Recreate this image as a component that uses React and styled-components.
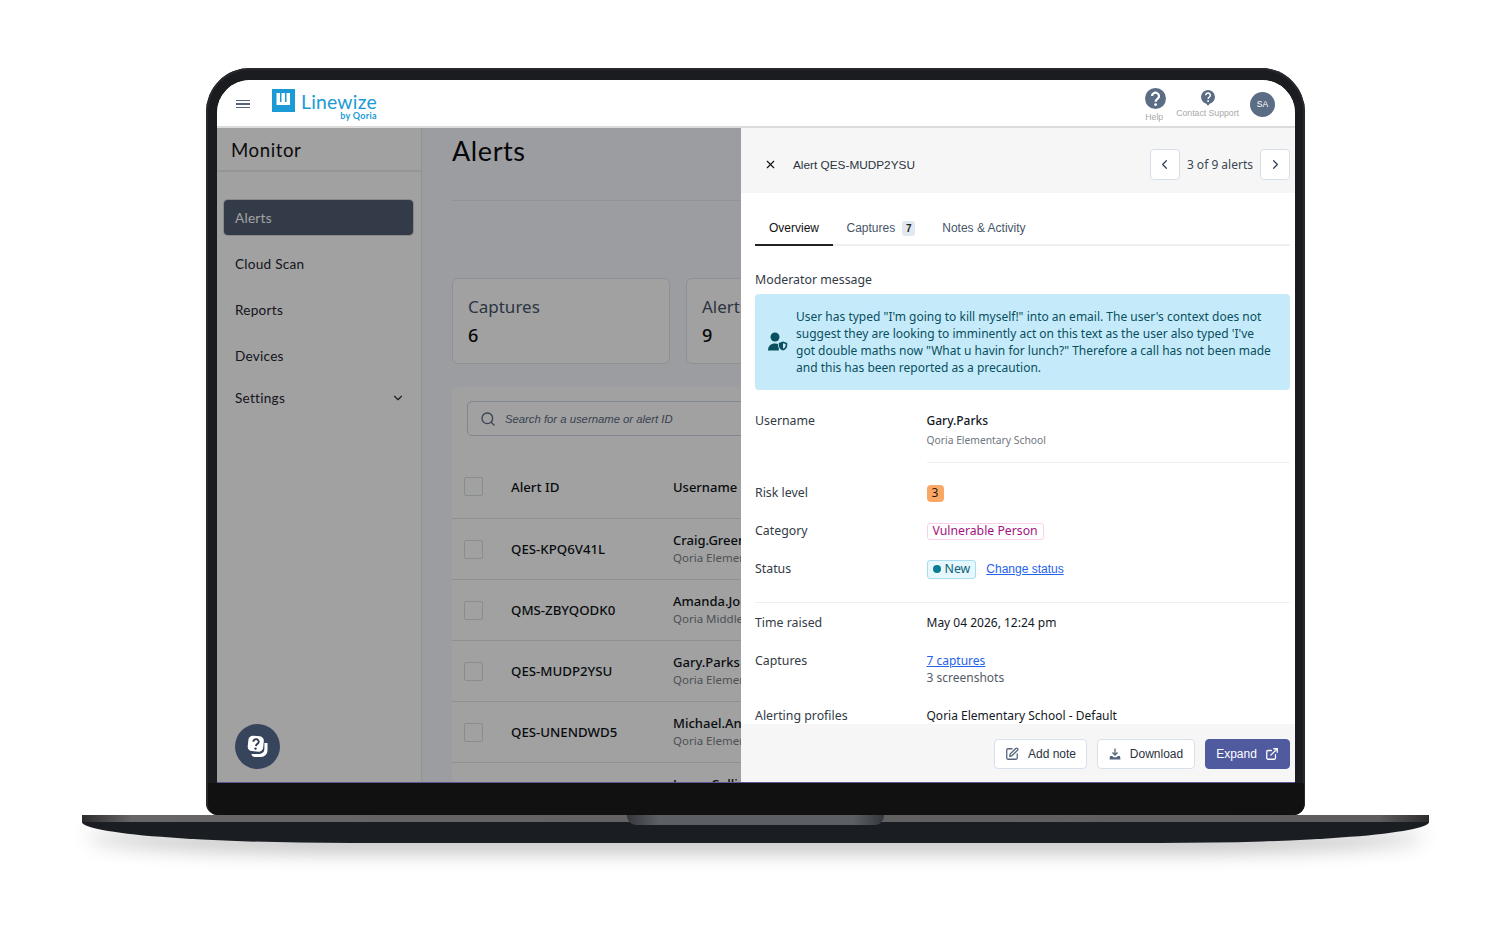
import React from "react";
import styled, { createGlobalStyle } from "styled-components";
import { ChevronDown, ChevronLeft, ChevronRight, ExternalLink, Search, SquarePen, X } from "lucide-react";

const GlobalStyle = createGlobalStyle`
  html, body { margin: 0; padding: 0; background: #fff; }
  body { font-family: "Noto Sans", sans-serif; color: #1e2530; }
  * { box-sizing: border-box; }
`;

const Page = styled.div`
  width: 1495px;
  height: 930px;
  padding-top: 68px;
  display: flex;
  flex-direction: column;
  align-items: center;
  overflow: hidden;
`;

const Lid = styled.div`
  width: 1099px;
  height: 747px;
  margin-left: 16px;
  padding: 12px 10px 0 11px;
  display: flex;
  flex-direction: column;
  background: #1a1c1f;
  border-radius: 44px 44px 12px 12px;
  box-shadow: inset 0 0 0 2px #26282c;
  flex-shrink: 0;
`;

const Screen = styled.div`
  height: 703px;
  display: flex;
  flex-direction: column;
  background: #fff;
  border-radius: 33px 33px 0 0;
  border-bottom: 1px solid #5d5596;
  overflow: hidden;
  flex-shrink: 0;
`;

const Chin = styled.div`
  flex: 1;
  margin: 0 -9px;
  background: #111;
  border-radius: 0 0 10px 10px;
`;

const Base = styled.div`
  position: relative;
  width: 1347px;
  height: 28px;
  flex-shrink: 0;
  margin-left: 16px;
  background:
    linear-gradient(90deg, #2c2c2c 0, #666 50px, #5d5d5d calc(100% - 50px), #2c2c2c 100%) 0 0 / 100% 7px no-repeat,
    #1a1d22;
  border-radius: 0 0 270px 270px / 0 0 21px 21px;
  box-shadow: 0 14px 20px -6px rgba(0, 0, 0, 0.3);
`;

const Notch = styled.div`
  position: absolute;
  left: 545px;
  top: 0;
  width: 257px;
  height: 10px;
  border-radius: 0 0 9px 9px;
  background: linear-gradient(90deg, #34373b, #5c5f63 12%, #5c5f63 88%, #34373b);
`;

const TopBar = styled.header`
  height: 48px;
  flex-shrink: 0;
  display: flex;
  align-items: center;
  padding: 0 19px;
  background: #fff;
  border-bottom: 2px solid #dcdcdc;
`;

const MenuButton = styled.div`
  width: 14px;
  display: flex;
  flex-direction: column;
  gap: 2px;
  margin-top: 2px;
  span { height: 1.5px; background: #55657c; }
`;

const Logo = styled.div`
  margin: 3px 0 0 22px;
  display: flex;
  align-items: flex-start;
  gap: 6px;
`;

const LogoWords = styled.div`
  display: flex;
  flex-direction: column;
  align-items: flex-end;
  color: #1c9ad6;
  line-height: 1;
`;

const LogoName = styled.span`
  font-family: "Lato", sans-serif;
  font-size: 19.4px;
  letter-spacing: 0.2px;
  margin-top: 3px;
`;

const LogoBy = styled.span`
  font-family: "Lato", sans-serif;
  font-size: 9px;
  font-weight: 700;
  letter-spacing: 0.3px;
  margin-top: -1px;
`;

const TopRight = styled.div`
  margin-left: auto;
  display: flex;
  align-items: center;
  margin-right: 1px;
`;

const HelpItem = styled.div`
  display: flex;
  flex-direction: column;
  align-items: center;
  margin-left: ${(p) => p.$left}px;
  margin-top: ${(p) => p.$top}px;
  font-family: "Liberation Sans", sans-serif;
  font-size: 8.7px;
  color: #a8a8a8;
  line-height: 10px;
  gap: ${(p) => p.$gap}px;
  svg { margin-left: ${(p) => p.$nudge ?? 0}px; }
`;

const Avatar = styled.div`
  width: 25px;
  height: 25px;
  margin: 2px 0 0 11px;
  border-radius: 50%;
  background: #5b6c85;
  color: #fff;
  font-family: "Liberation Sans", sans-serif;
  font-size: 8.5px;
  display: flex;
  align-items: center;
  justify-content: center;
`;

const AppBody = styled.div`
  position: relative;
  flex: 1;
  min-height: 0;
  display: flex;
  overflow: hidden;
`;

const Sidebar = styled.aside`
  width: 205px;
  flex-shrink: 0;
  background: #fff;
  border-right: 1px solid #e6e9ee;
`;

const SideHead = styled.div`
  height: 44px;
  padding: 7px 0 0 14px;
  font-family: "Lato", sans-serif;
  font-size: 18.6px;
  letter-spacing: 0.6px;
  line-height: 30px;
  color: #111;
  border-bottom: 2px solid #ececec;
`;

const Nav = styled.nav`
  padding: 28px 8px 0 7px;
  display: flex;
  flex-direction: column;
`;

const NavItem = styled.div`
  height: 35px;
  margin-bottom: ${(p) => p.$after ?? 11}px;
  padding: 0 8px 0 11px;
  display: flex;
  align-items: center;
  justify-content: space-between;
  border-radius: 4px;
  font-family: "Lato", sans-serif;
  font-size: 13.6px;
  letter-spacing: 0.25px;
  color: ${(p) => (p.$active ? "#fff" : "#1e2530")};
  background: ${(p) => (p.$active ? "#515e73" : "transparent")};
  box-shadow: ${(p) => (p.$active ? "0 0 0 1px #d8d8d8" : "none")};
`;

const ChatButton = styled.div`
  position: absolute;
  left: 18px;
  top: 596px;
  width: 45px;
  height: 45px;
  border-radius: 50%;
  background: #36455c;
  display: flex;
  align-items: center;
  justify-content: center;
  z-index: 3;
`;

const Main = styled.main`
  flex: 1;
  min-width: 0;
  padding-left: 30px;
  background: #f5f9ff;
`;

const PageTitle = styled.h1`
  margin: 0 0 77px;
  height: 73px;
  padding-top: 3px;
  font-family: "Lato", sans-serif;
  font-size: 27px;
  font-weight: 400;
  letter-spacing: 0.6px;
  line-height: 40px;
  color: #0c0c0c;
  border-bottom: 1px solid #e6ebf1;
`;

const CardRow = styled.div`
  display: flex;
  gap: 16px;
  margin-bottom: 23px;
`;

const StatCard = styled.div`
  width: 218px;
  height: 86px;
  padding: 15px 15px;
  flex-shrink: 0;
  background: #fff;
  border: 1px solid #dfe6ee;
  border-radius: 6px;
`;

const StatLabel = styled.div`
  font-size: 17px;
  line-height: 26px;
  color: #475569;
`;

const StatValue = styled.div`
  font-size: 18px;
  line-height: 30px;
  font-weight: 500;
  color: #0c0c0c;
`;

const TableCard = styled.section`
  background: #fff;
  border-radius: 6px 6px 0 0;
`;

const SearchWrap = styled.div`
  padding: 14px 15px 0;
`;

const SearchBox = styled.div`
  height: 35px;
  display: flex;
  align-items: center;
  gap: 9px;
  padding-left: 12px;
  border: 1px solid #c9d4e0;
  border-radius: 5px;
  color: #5a6a80;
  font-family: "Liberation Sans", sans-serif;
  font-style: italic;
  font-size: 11.3px;
`;

const Row = styled.div`
  height: ${(p) => (p.$head ? 83 : 61)}px;
  display: flex;
  align-items: center;
  padding: ${(p) => (p.$head ? "19px 0 0 12px" : "0 0 0 12px")};
  border-bottom: 1px solid #e4e4e4;
  font-size: 13px;
  color: #0f1419;
`;

const Check = styled.div`
  width: 19px;
  height: 19px;
  border: 1px solid #d8dfe8;
  border-radius: 2px;
  background: #fff;
`;

const IdCell = styled.div`
  width: 190px;
  padding-left: 28px;
  font-size: 13.25px;
  font-weight: 500;
  white-space: nowrap;
`;

const UserCell = styled.div`
  white-space: nowrap;
  line-height: 18px;
  font-weight: 500;
  small {
    display: block;
    font-size: 11.5px;
    font-weight: 400;
    color: #7b8289;
  }
`;

const Scrim = styled.div`
  position: absolute;
  inset: 0;
  background: rgba(0, 0, 0, 0.37);
  z-index: 1;
`;

const Drawer = styled.aside`
  position: absolute;
  top: 0;
  right: 0;
  bottom: 0;
  width: 554px;
  display: flex;
  flex-direction: column;
  background: #fff;
  z-index: 2;
`;

const DrawerHead = styled.div`
  height: 65px;
  flex-shrink: 0;
  display: flex;
  align-items: center;
  padding: 8px 5px 0 23px;
  background: #f6f6f6;
`;

const DrawerTitle = styled.div`
  margin-left: 16px;
  font-family: "Liberation Sans", sans-serif;
  font-size: 11.8px;
  color: #2a3340;
`;

const Pager = styled.div`
  margin-left: auto;
  display: flex;
  align-items: center;
  gap: 7px;
  font-size: 12px;
  color: #3c4654;
`;

const PagerButton = styled.div`
  width: 30px;
  height: 31px;
  display: flex;
  align-items: center;
  justify-content: center;
  background: #fff;
  border: 1px solid #d7e0ea;
  border-radius: 4px;
  color: #33415a;
`;

const Tabs = styled.div`
  height: 53px;
  flex-shrink: 0;
  margin: 0 5px 0 14px;
  display: flex;
  align-items: flex-end;
  border-bottom: 2px solid #eeeeee;
`;

const Tab = styled.div`
  display: flex;
  align-items: center;
  gap: 7px;
  height: 36px;
  margin-bottom: -2px;
  padding: 2px ${(p) => (p.$active ? 14 : 13.5)}px 0;
  font-family: "Liberation Sans", sans-serif;
  font-size: 12px;
  color: ${(p) => (p.$active ? "#111" : "#475569")};
  border-bottom: 2px solid ${(p) => (p.$active ? "#222" : "transparent")};
`;

const TabCount = styled.span`
  min-width: 13px;
  height: 15px;
  padding: 0 3px;
  display: flex;
  align-items: center;
  justify-content: center;
  border-radius: 3px;
  background: #e2e8f0;
  color: #222;
  font-size: 10px;
  font-weight: 600;
`;

const DrawerBody = styled.div`
  flex: 1;
  min-height: 0;
  overflow: hidden;
  padding: 25px 5px 0 14px;
  font-size: 12.35px;
  color: #333b46;
`;

const SectionLabel = styled.div`
  line-height: 18px;
  margin-bottom: 5px;
`;

const Message = styled.div`
  height: 96px;
  display: flex;
  align-items: center;
  gap: 8px;
  padding: 0 16px 0 13px;
  margin-bottom: 21px;
  background: #c5ebfa;
  border-radius: 4px;
  color: #094f5e;
  font-size: 12px;
  line-height: 17px;
`;

const Field = styled.div`
  display: grid;
  grid-template-columns: 171.5px 1fr;
  align-items: ${(p) => (p.$top ? "start" : "center")};
  min-height: 20px;
  margin-bottom: ${(p) => p.$after ?? 18}px;
  line-height: 20px;
`;

const Value = styled.div`
  color: #14181f;
  font-size: 12px;
  ${(p) => p.$strong && "font-weight: 500;"}
`;

const SubText = styled.div`
  color: ${(p) => p.$color ?? "#6f7680"};
  font-size: ${(p) => p.$size ?? 10.3}px;
  line-height: 17px;
  margin-top: ${(p) => p.$top ?? 1}px;
`;

const Divider = styled.div`
  height: 1px;
  margin: ${(p) => p.$margin};
  background: #efefef;
`;

const RiskBadge = styled.span`
  display: inline-flex;
  width: 17px;
  height: 17px;
  align-items: center;
  justify-content: center;
  border-radius: 4px;
  background: #fba765;
  color: #2a1a0c;
  font-size: 12px;
`;

const CategoryBadge = styled.span`
  display: inline-flex;
  height: 17px;
  align-items: center;
  padding: 0 5px;
  border: 1px solid #fbd0ee;
  border-radius: 3px;
  color: #a3127e;
  font-size: 12.25px;
`;

const StatusRow = styled.div`
  display: flex;
  align-items: center;
  gap: 10px;
`;

const StatusBadge = styled.span`
  display: inline-flex;
  height: 19px;
  align-items: center;
  gap: 4px;
  padding: 0 5px;
  background: #e6f7fd;
  border: 1px solid #a8dcef;
  border-radius: 3px;
  color: #0b6277;
  i {
    width: 8px;
    height: 8px;
    border-radius: 50%;
    background: #0a7c96;
  }
`;

const TextLink = styled.a`
  color: #2563eb;
  text-decoration: underline;
  font-size: 12px;
  font-family: ${(p) => (p.$plain ? '"Liberation Sans", sans-serif' : "inherit")};
`;

const DrawerFoot = styled.div`
  height: 58px;
  flex-shrink: 0;
  display: flex;
  justify-content: flex-end;
  gap: 10px;
  padding: 15px 5px 0 0;
  background: #f6f6f6;
`;

const FootButton = styled.div`
  width: ${(p) => p.$width}px;
  height: 30px;
  display: flex;
  align-items: center;
  justify-content: center;
  gap: ${(p) => p.$gap ?? 9}px;
  border-radius: 4px;
  font-family: "Liberation Sans", sans-serif;
  font-size: 12px;
  background: ${(p) => (p.$primary ? "#4f5a9f" : "#fff")};
  color: ${(p) => (p.$primary ? "#fff" : "#2a3340")};
  border: 1px solid ${(p) => (p.$primary ? "#4f5a9f" : "#d7e0ea")};
`;

const rows = [
  ["QES-KPQ6V41L", "Craig.Green", "Qoria Elementary School"],
  ["QMS-ZBYQODK0", "Amanda.Jones", "Qoria Middle School"],
  ["QES-MUDP2YSU", "Gary.Parks", "Qoria Elementary School"],
  ["QES-UNENDWD5", "Michael.Anderson", "Qoria Elementary School"],
  ["QES-LCOLLINS", "Laura.Collins", "Qoria Elementary School"],
];

function LogoMark() {
  return (
    <svg width="23" height="23" viewBox="0 0 23 23">
      <rect width="23" height="23" fill="#1c9ad6" />
      <path d="M4.500 4h3.500v9h1.500V4H13v9h1.500V4H18v12H4.500z" fill="#fff" />
    </svg>
  );
}

function HelpIcon() {
  return (
    <svg width="21" height="21" viewBox="0 0 21 21">
      <circle cx="10.500" cy="10.500" r="10.500" fill="#5b6c85" />
      <path d="M7 8a3.500 3.300 0 1 1 5.600 2.700c-1.300 1-2 1.500-2 3" fill="none" stroke="#fff" strokeWidth="2.200" />
      <circle cx="10.600" cy="16.600" r="1.400" fill="#fff" />
    </svg>
  );
}

function SupportIcon() {
  return (
    <svg width="14" height="16" viewBox="0 0 14 16">
      <path d="M7 0a7 7 0 0 1 1.600 13.800L7 16l-1.600-2.200A7 7 0 0 1 7 0z" fill="#5b6c85" />
      <path d="M4.700 5.200a2.300 2.200 0 1 1 3.700 1.800c-.8.600-1.300 1-1.300 2" fill="none" stroke="#fff" strokeWidth="1.500" />
      <circle cx="7.100" cy="11" r=".95" fill="#fff" />
    </svg>
  );
}

function ChatIcon() {
  return (
    <svg width="26" height="26" viewBox="0 0 26 26">
      <path d="M22.500 9v7.500a6.500 6.500 0 0 1-6.500 6.500H10c-2 0-3.300-1-3.600-3h8a5 5 0 0 0 5-5V9z" fill="#fff" />
      <rect x="3" y="2" width="15.500" height="15.500" rx="4.500" fill="#fff" transform="rotate(6 11 10)" />
      <path d="M8.300 7.700a2.700 2.500 0 1 1 4.300 2c-1 .7-1.500 1-1.700 2.300" fill="none" stroke="#2c3a50" strokeWidth="1.900" />
      <circle cx="10.500" cy="14.600" r="1.200" fill="#2c3a50" />
    </svg>
  );
}

function UserShieldIcon() {
  return (
    <svg width="20" height="20" viewBox="0 0 20 20" style={{ flexShrink: 0 }}>
      <circle cx="7" cy="5" r="4.500" fill="#094f5e" />
      <path d="M0 18.500c0-4.500 3-7 7-7 1.500 0 2.800.3 3.800 1v6z" fill="#094f5e" />
      <path d="M15 8.500l5 1.800v3c0 2.800-2 4.800-5 6-3-1.200-5-3.200-5-6v-3z" fill="#c5ebfa" />
      <path d="M15 9.500l4.200 1.500v2.500c0 2.400-1.700 4-4.200 5-2.500-1-4.200-2.600-4.200-5V11z" fill="#094f5e" />
      <path d="M15 11.200l2.600.9v1.500c0 1.500-1 2.500-2.600 3.200z" fill="#c5ebfa" />
    </svg>
  );
}

function DownloadIcon() {
  return (
    <svg width="12" height="12" viewBox="0 0 12 12">
      <path d="M6 0.500v6M3.500 4.500L6 7l2.500-2.500" fill="none" stroke="#55657c" strokeWidth="1.300" />
      <path d="M1 8h2.200L4.500 9.300h3L8.800 8H11l.5 3.500H.5z" fill="#55657c" />
    </svg>
  );
}

export default function App() {
  return (
    <Page>
      <GlobalStyle />
      <Lid>
        <Screen>
          <TopBar>
            <MenuButton>
              <span />
              <span />
              <span />
            </MenuButton>
            <Logo>
              <LogoMark />
              <LogoWords>
                <LogoName>Linewize</LogoName>
                <LogoBy>by Qoria</LogoBy>
              </LogoWords>
            </Logo>
            <TopRight>
              <HelpItem $top={3} $gap={3} $nudge={3}>
                <HelpIcon />
                Help
              </HelpItem>
              <HelpItem $left={10} $top={2} $gap={2}>
                <SupportIcon />
                Contact Support
              </HelpItem>
              <Avatar>SA</Avatar>
            </TopRight>
          </TopBar>
          <AppBody>
            <Sidebar>
              <SideHead>Monitor</SideHead>
              <Nav>
                <NavItem $active>Alerts</NavItem>
                <NavItem>Cloud Scan</NavItem>
                <NavItem>Reports</NavItem>
                <NavItem $after={7}>Devices</NavItem>
                <NavItem>
                  Settings
                  <ChevronDown size={14} color="#333" />
                </NavItem>
              </Nav>
            </Sidebar>
            <Main>
              <PageTitle>Alerts</PageTitle>
              <CardRow>
                <StatCard>
                  <StatLabel>Captures</StatLabel>
                  <StatValue>6</StatValue>
                </StatCard>
                <StatCard>
                  <StatLabel>Alerts</StatLabel>
                  <StatValue>9</StatValue>
                </StatCard>
              </CardRow>
              <TableCard>
                <SearchWrap>
                  <SearchBox>
                    <Search size={16} />
                    Search for a username or alert ID
                  </SearchBox>
                </SearchWrap>
                <Row $head>
                  <Check />
                  <IdCell>Alert ID</IdCell>
                  <UserCell>Username</UserCell>
                </Row>
                {rows.map(([id, name, school]) => (
                  <Row key={id}>
                    <Check />
                    <IdCell>{id}</IdCell>
                    <UserCell>
                      {name}
                      <small>{school}</small>
                    </UserCell>
                  </Row>
                ))}
              </TableCard>
            </Main>
            <Scrim />
            <ChatButton>
              <ChatIcon />
            </ChatButton>
            <Drawer>
              <DrawerHead>
                <X size={13} color="#111" strokeWidth={2} />
                <DrawerTitle>Alert QES-MUDP2YSU</DrawerTitle>
                <Pager>
                  <PagerButton>
                    <ChevronLeft size={15} />
                  </PagerButton>
                  3 of 9 alerts
                  <PagerButton>
                    <ChevronRight size={15} />
                  </PagerButton>
                </Pager>
              </DrawerHead>
              <Tabs>
                <Tab $active>Overview</Tab>
                <Tab>
                  Captures
                  <TabCount>7</TabCount>
                </Tab>
                <Tab>Notes &amp; Activity</Tab>
              </Tabs>
              <DrawerBody>
                <SectionLabel>Moderator message</SectionLabel>
                <Message>
                  <UserShieldIcon />
                  <div>
                    User has typed "I'm going to kill myself!" into an email. The user's context does not suggest they are
                    looking to imminently act on this text as the user also typed 'I've got double maths now "What u havin
                    for lunch?" Therefore a call has not been made and this has been reported as a precaution.
                  </div>
                </Message>
                <Field $top $after={0}>
                  <div>Username</div>
                  <div>
                    <Value $strong>Gary.Parks</Value>
                    <SubText>Qoria Elementary School</SubText>
                  </div>
                </Field>
                <Divider $margin="13px 0 20px 171.5px" />
                <Field>
                  <div>Risk level</div>
                  <div>
                    <RiskBadge>3</RiskBadge>
                  </div>
                </Field>
                <Field>
                  <div>Category</div>
                  <div>
                    <CategoryBadge>Vulnerable Person</CategoryBadge>
                  </div>
                </Field>
                <Field $after={0}>
                  <div>Status</div>
                  <StatusRow>
                    <StatusBadge>
                      <i />
                      New
                    </StatusBadge>
                    <TextLink $plain>Change status</TextLink>
                  </StatusRow>
                </Field>
                <Divider $margin="23px 0 10px" />
                <Field>
                  <div>Time raised</div>
                  <Value>May 04 2026, 12:24 pm</Value>
                </Field>
                <Field $top $after={20}>
                  <div>Captures</div>
                  <div>
                    <TextLink>7 captures</TextLink>
                    <SubText $size={12} $color="#555c66" $top={-2}>
                      3 screenshots
                    </SubText>
                  </div>
                </Field>
                <Field>
                  <div>Alerting profiles</div>
                  <Value>Qoria Elementary School - Default</Value>
                </Field>
              </DrawerBody>
              <DrawerFoot>
                <FootButton $width={93}>
                  <SquarePen size={14} color="#55657c" strokeWidth={2.2} />
                  Add note
                </FootButton>
                <FootButton $width={98}>
                  <DownloadIcon />
                  Download
                </FootButton>
                <FootButton $primary $width={85} $gap={8}>
                  Expand
                  <ExternalLink size={14} strokeWidth={2.2} />
                </FootButton>
              </DrawerFoot>
            </Drawer>
          </AppBody>
        </Screen>
        <Chin />
      </Lid>
      <Base>
        <Notch />
      </Base>
    </Page>
  );
}
